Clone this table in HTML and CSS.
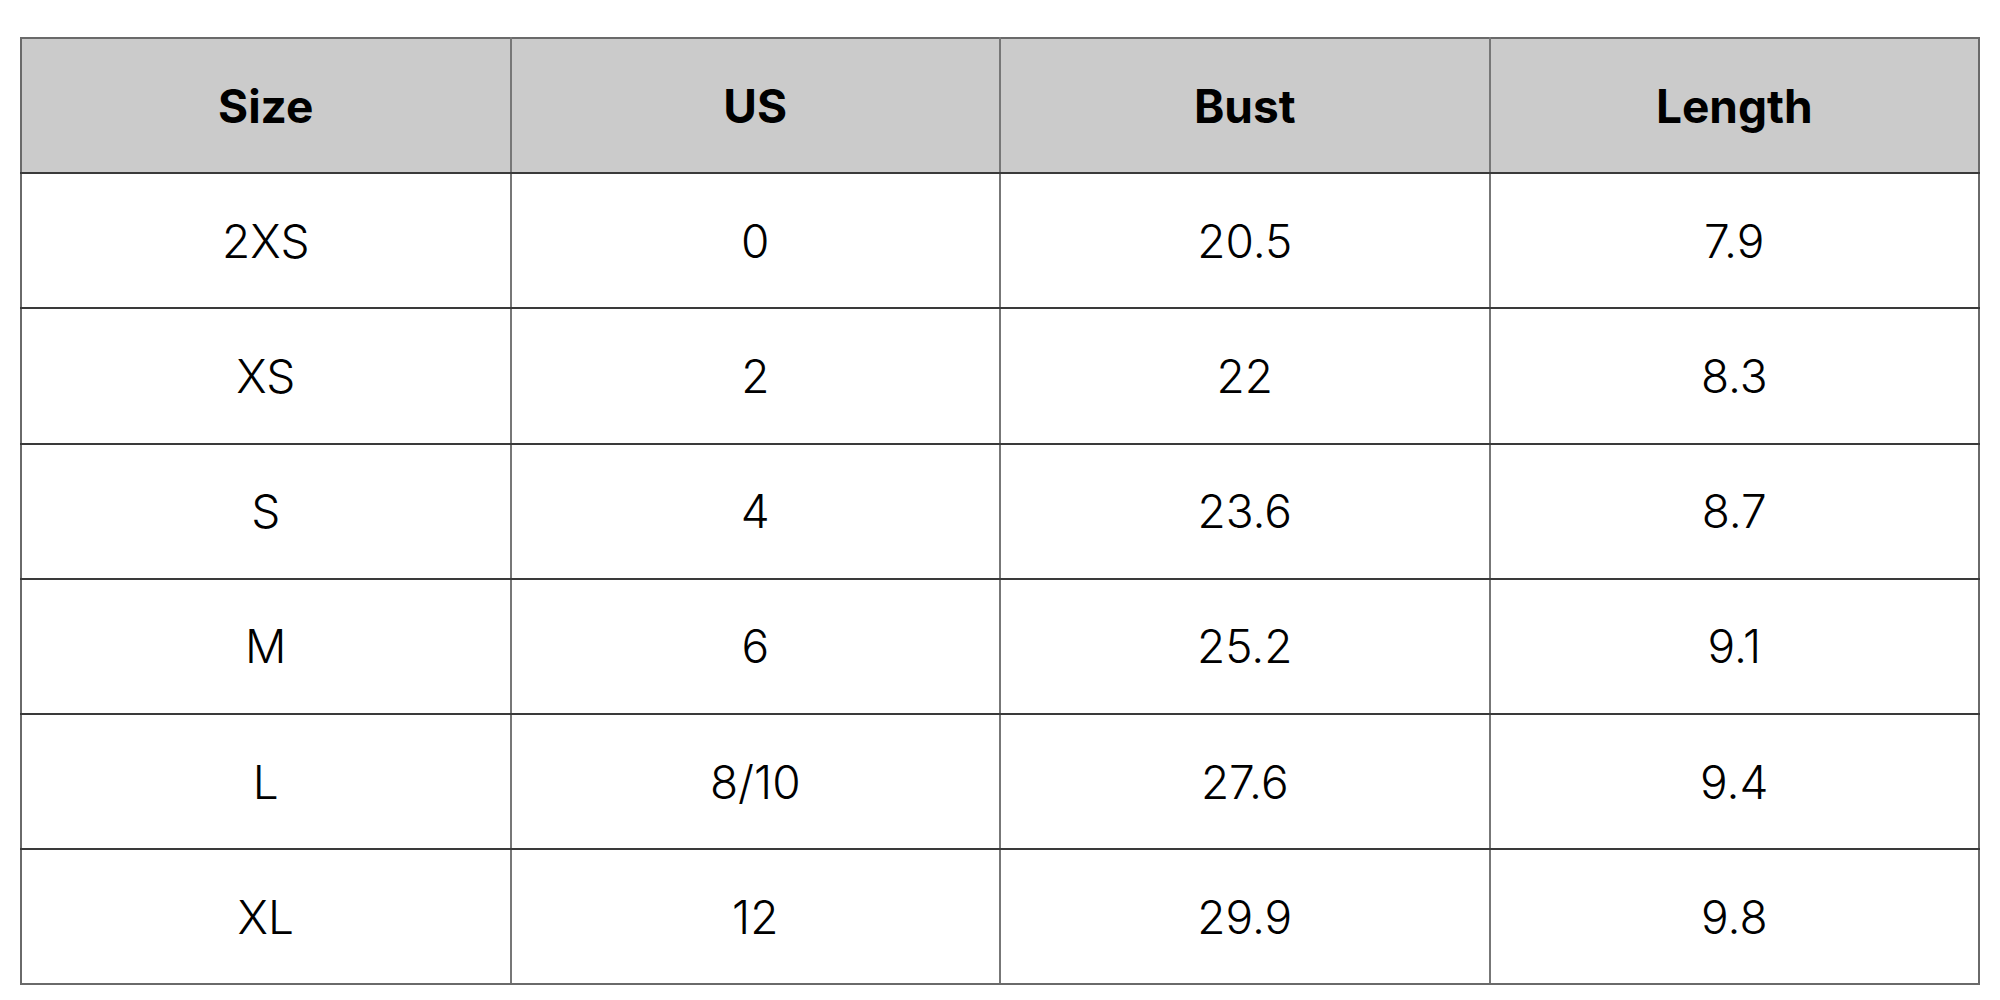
FILE: index.html
```html
<!DOCTYPE html>
<html>
<head>
<meta charset="utf-8">
<link rel="stylesheet" href="styles.css">
</head>
<body>
<table class="size-table">
  <thead>
    <tr><th>Size</th><th>US</th><th>Bust</th><th>Length</th></tr>
  </thead>
  <tbody>
    <tr><td>2XS</td><td>0</td><td>20.5</td><td>7.9</td></tr>
    <tr><td>XS</td><td>2</td><td>22</td><td>8.3</td></tr>
    <tr><td>S</td><td>4</td><td>23.6</td><td>8.7</td></tr>
    <tr><td>M</td><td>6</td><td>25.2</td><td>9.1</td></tr>
    <tr><td>L</td><td>8/10</td><td>27.6</td><td>9.4</td></tr>
    <tr><td>XL</td><td>12</td><td>29.9</td><td>9.8</td></tr>
  </tbody>
</table>
</body>
</html>
```
FILE: styles.css
```css
html, body {
  margin: 0;
  padding: 0;
  background: #ffffff;
}
body {
  padding: 37px 20px 0 20px;
  font-family: Inter, "Noto Sans", sans-serif;
  color: #000;
}
.size-table {
  width: 1960px;
  border-collapse: collapse;
  table-layout: fixed;
  border: 2px solid #6a6a6a;
}
.size-table th,
.size-table td {
  text-align: center;
  vertical-align: middle;
  padding: 0;
  height: 133.2px;
  border-left: 2px solid #777777;
  border-right: 2px solid #777777;
  border-top: 2px solid #3a3a3a;
  border-bottom: 2px solid #3a3a3a;
}
.size-table th {
  background: #cbcbcb;
  font-weight: 700;
  font-size: 46px;
}
.size-table td {
  font-weight: 350;
  font-size: 46px;
}
.size-table thead tr th {
  border-top: 2px solid #6a6a6a;
}
.size-table tbody tr:last-child td {
  border-bottom: 2px solid #6a6a6a;
}
.size-table tr > :first-child {
  border-left: 2px solid #6a6a6a;
}
.size-table tr > :last-child {
  border-right: 2px solid #6a6a6a;
}
```
